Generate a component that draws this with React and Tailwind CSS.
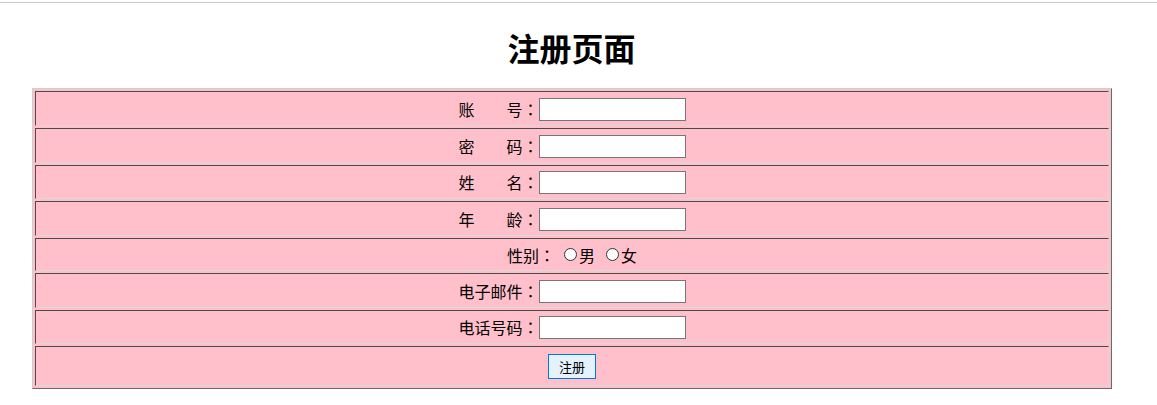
import React from "react";

const font = { fontFamily: '"Noto Sans CJK SC", "Noto Sans", sans-serif' };
const colonFont = { fontFamily: '"Noto Sans CJK JP", "Noto Sans CJK SC", sans-serif' };

const rows = [
  { label: "账\u3000\u3000号", h: "h-[35px]" },
  { label: "密\u3000\u3000码", h: "h-[35px]", type: "password" },
  { label: "姓\u3000\u3000名", h: "h-[34px]" },
  { label: "年\u3000\u3000龄", h: "h-[35px]" },
  { gender: true, h: "h-[33px]" },
  { label: "电子邮件", h: "h-[35px]" },
  { label: "电话号码", h: "h-[34px]" },
];

function Cell({ h, children }) {
  return (
    <div
      className={`${h} flex items-center justify-center bg-[#ffc0cb] border border-t-[#4a4a4a] border-l-[#4a4a4a] border-b-[#d8d8d8] border-r-[#d8d8d8]`}
    >
      {children}
    </div>
  );
}

function Radio({ label }) {
  return (
    <label className="flex items-center">
      <span className="w-[13px] h-[13px] rounded-full border border-[#333] bg-white mr-[2px]" />
      <span>{label}</span>
    </label>
  );
}

const Colon = () => <span style={colonFont}>：</span>;

export default function App() {
  return (
    <div className="w-[1157px] h-[405px] bg-white text-black" style={font}>
      <div className="mt-[2px] border-t border-[#c8c8c8]" />
      <div className="w-[1143px] h-[85px] pt-[24px]">
        <h1 className="text-[32px] leading-[40px] font-bold text-center">注册页面</h1>
      </div>
      <div className="ml-[32px] w-[1080px] bg-[#ffc0cb] p-[2px] flex flex-col gap-[2px] border border-t-[#cfcfcf] border-l-[#cfcfcf] border-b-[#6a6a6a] border-r-[#6a6a6a]">
        {rows.map((r, i) => (
          <Cell key={i} h={r.h}>
            {r.gender ? (
              <div className="flex items-center text-[16px] leading-[20px]">
                <span>性别</span>
                <Colon />
                <span className="w-[9px]" />
                <Radio label="男" />
                <span className="w-[11px]" />
                <Radio label="女" />
              </div>
            ) : (
              <div className="flex items-center">
                <span className="w-[80px] text-[16px] leading-[20px] whitespace-pre">
                  {r.label}
                  <Colon />
                </span>
                <input
                  type={r.type || "text"}
                  className="w-[147px] h-[23px] mt-[1px] bg-white border border-[#767676] px-[2px] text-[13px] outline-none"
                />
              </div>
            )}
          </Cell>
        ))}
        <Cell h="h-[40px]">
          <button className="w-[48px] h-[25px] mt-[1px] border border-[#0078d7] bg-[#e5f1fb] text-[13px] leading-[16px]">
            注册
          </button>
        </Cell>
      </div>
    </div>
  );
}
